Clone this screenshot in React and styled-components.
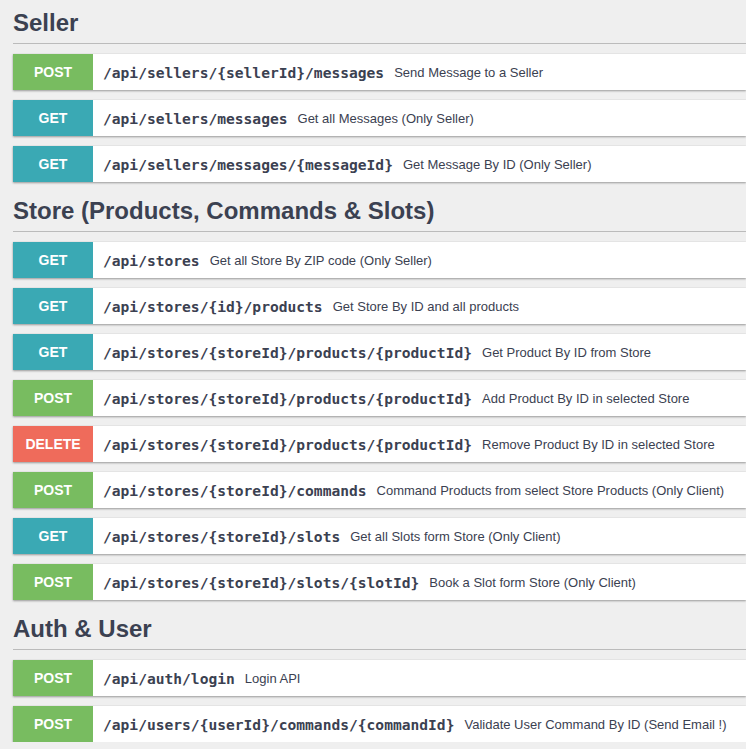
import React from 'react'
import styled, { createGlobalStyle } from 'styled-components';

const GlobalStyle = createGlobalStyle`
body {
    margin: 0;
    background: #efefef;
    font-family: "Liberation Sans", Arial, sans-serif;
    color: #3b4151;
    overflow: hidden;
}
`;

const methodColors = {
    GET: '#3aa9b4',
    POST: '#78bc60',
    DELETE: '#ef6b5b',
};

const Page = styled.div`
padding: 0 0 0 13px;
display: flex;
flex-direction: column;
`;

const Section = styled.section`
display: flex;
flex-direction: column;
gap: 10px;
& + & {
    margin-top: 6px;
}
`;

const Heading = styled.h2`
margin: 0;
padding: 8px 0 5px;
line-height: 30px;
font-size: 24px;
font-weight: bold;
color: #3b4151;
border-bottom: 1px solid #bbbbbb;
`;

const Row = styled.div`
display: flex;
align-items: center;
height: 36px;
background: white;
box-shadow: 0 1px 2px rgba(0, 0, 0, 0.35), 0 0 1px rgba(0, 0, 0, 0.12);
`;

const Method = styled.div`
width: 80px;
height: 100%;
flex-shrink: 0;
display: flex;
align-items: center;
justify-content: center;
background: ${props => methodColors[props.method]};
color: white;
font-size: 14px;
font-weight: bold;
`;

const Path = styled.span`
padding: 0 10px;
font-family: "DejaVu Sans Mono", monospace;
font-size: 14.6px;
font-weight: bold;
color: #3b4151;
white-space: nowrap;
`;

const Description = styled.span`
font-size: 13px;
color: #3b4151;
white-space: nowrap;
`;

const sections = [
    {
        title: 'Seller',
        routes: [
            ['POST', '/api/sellers/{sellerId}/messages', 'Send Message to a Seller'],
            ['GET', '/api/sellers/messages', 'Get all Messages (Only Seller)'],
            ['GET', '/api/sellers/messages/{messageId}', 'Get Message By ID (Only Seller)'],
        ],
    },
    {
        title: 'Store (Products, Commands & Slots)',
        routes: [
            ['GET', '/api/stores', 'Get all Store By ZIP code (Only Seller)'],
            ['GET', '/api/stores/{id}/products', 'Get Store By ID and all products'],
            ['GET', '/api/stores/{storeId}/products/{productId}', 'Get Product By ID from Store'],
            ['POST', '/api/stores/{storeId}/products/{productId}', 'Add Product By ID in selected Store'],
            ['DELETE', '/api/stores/{storeId}/products/{productId}', 'Remove Product By ID in selected Store'],
            ['POST', '/api/stores/{storeId}/commands', 'Command Products from select Store Products (Only Client)'],
            ['GET', '/api/stores/{storeId}/slots', 'Get all Slots form Store (Only Client)'],
            ['POST', '/api/stores/{storeId}/slots/{slotId}', 'Book a Slot form Store (Only Client)'],
        ],
    },
    {
        title: 'Auth & User',
        routes: [
            ['POST', '/api/auth/login', 'Login API'],
            ['POST', '/api/users/{userId}/commands/{commandId}', 'Validate User Command By ID (Send Email !)'],
        ],
    },
];

export default function App() {
    return (
        <Page>
            <GlobalStyle />
            {
                sections.map((section) => (
                    <Section key={section.title}>
                        <Heading>{section.title}</Heading>
                        {
                            section.routes.map(([method, path, desc], index) => (
                                <Row key={index}>
                                    <Method method={method}>{method}</Method>
                                    <Path>{path}</Path>
                                    <Description>{desc}</Description>
                                </Row>
                            ))
                        }
                    </Section>
                ))
            }
        </Page>
    )
}
